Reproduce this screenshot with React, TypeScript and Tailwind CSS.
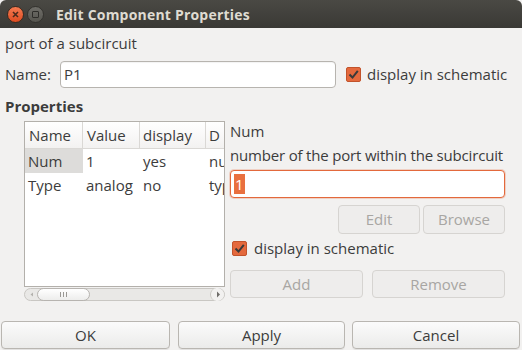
const font = "font-['Open_Sans','DejaVu_Sans',sans-serif]"

function CheckBox() {
  return (
    <span className="w-[15px] h-[15px] rounded-[2px] bg-[#e4693d] border border-[#c2532b] flex items-center justify-center shrink-0">
      <svg width="11" height="11" viewBox="0 0 11 11">
        <path d="M1.5 5.5 L4.5 8.5 L9.8 1.8" fill="none" stroke="#3a3a3a" strokeWidth="2" />
      </svg>
    </span>
  )
}

interface ButtonProps {
  label: string
  disabled?: boolean
  className?: string
}

function Button({ label, disabled = false, className = '' }: ButtonProps) {
  return (
    <div
      className={`flex items-center justify-center rounded-[4px] border ${
        disabled
          ? 'border-[#d6d4d1] text-[#a8a6a3] bg-[#eeedec]'
          : 'border-[#b9b6b1] text-[#3c3c3c] bg-gradient-to-b from-[#fbfbfb] to-[#ebebea] shadow-[0_1px_0_rgba(0,0,0,0.06)]'
      } ${className}`}
    >
      {label}
    </div>
  )
}

function PropertyTable() {
  const rows = [
    { name: 'Num', value: '1', display: 'yes', desc: 'number', selected: true },
    { name: 'Type', value: 'analog', display: 'no', desc: 'type', selected: false },
  ]
  return (
    <div className="w-[201px] ml-[24px] flex flex-col">
      <div className="h-[166px] border border-[#b3b0ab] bg-white overflow-hidden">
        <div className="flex h-[27px] border-b border-[#dad8d5] bg-gradient-to-b from-[#ffffff] to-[#f3f2f1] overflow-hidden">
          <div className="w-[58px] shrink-0 pl-[4px] flex items-center border-r border-[#dad8d5]">Name</div>
          <div className="w-[57px] shrink-0 pl-[4px] flex items-center border-r border-[#dad8d5]">Value</div>
          <div className="w-[66px] shrink-0 pl-[3px] flex items-center border-r border-[#dad8d5]">display</div>
          <div className="w-[18px] shrink-0 pl-[3px] flex items-center overflow-hidden">D</div>
        </div>
        {rows.map((r) => (
          <div key={r.name} className="flex h-[24px] items-center whitespace-nowrap overflow-hidden">
            <div className={`w-[58px] h-full shrink-0 pl-[3px] flex items-center ${r.selected ? 'bg-[#dddcda]' : ''}`}>{r.name}</div>
            <div className="w-[57px] shrink-0 pl-[3px]">{r.value}</div>
            <div className="w-[66px] shrink-0 pl-[3px]">{r.display}</div>
            <div className="w-[18px] shrink-0 pl-[3px] overflow-hidden">{r.desc}</div>
          </div>
        ))}
      </div>
      {/* horizontal scrollbar */}
      <div className="h-[13px] mt-px rounded-full border border-[#c9c7c3] bg-[#e9e8e6] flex items-center">
        <svg width="10" height="11" viewBox="0 0 10 11" className="shrink-0 ml-[2px]">
          <path d="M6 3.5 L3.5 5.5 L6 7.5 Z" fill="#b3b1ad" />
        </svg>
        <div className="w-[53px] h-[13px] -my-px rounded-full border border-[#b7b4b0] bg-gradient-to-b from-[#ffffff] to-[#ededec] flex items-center justify-center gap-[2px]">
          <span className="w-px h-[5px] bg-[#9a9894]" />
          <span className="w-px h-[5px] bg-[#9a9894]" />
          <span className="w-px h-[5px] bg-[#9a9894]" />
        </div>
        <div className="flex-1" />
        <div className="w-[14px] h-[13px] -my-px rounded-full border-l border-[#c9c7c3] bg-[#f2f1f0] flex items-center justify-center">
          <svg width="8" height="9" viewBox="0 0 8 9">
            <path d="M3 1.5 L6 4.5 L3 7.5 Z" fill="#6e6c68" />
          </svg>
        </div>
      </div>
    </div>
  )
}

export default function App() {
  return (
    <div className={`w-[522px] h-[350px] bg-[#f2f1f0] flex flex-col overflow-hidden text-[15px] text-[#3c3c3c] ${font}`}>
      {/* title bar */}
      <div className="h-[28px] shrink-0 rounded-t-[6px] bg-gradient-to-b from-[#4a4944] to-[#3a3935] flex items-center">
        <div className="ml-[7px] w-[17px] h-[17px] rounded-full bg-gradient-to-b from-[#f47a50] to-[#de4b1f] border border-[#3a2a20] flex items-center justify-center">
          <svg width="7" height="7" viewBox="0 0 7 7">
            <path d="M1 1 L6 6 M6 1 L1 6" stroke="#4a2a1c" strokeWidth="1.6" />
          </svg>
        </div>
        <div className="ml-[3px] w-[17px] h-[17px] rounded-full bg-gradient-to-b from-[#6e6d68] to-[#56554f] border border-[#33322e] flex items-center justify-center">
          <span className="w-[7px] h-[7px] border-[1.5px] border-[#2e2d2a] rounded-[1px]" />
        </div>
        <span className="ml-[12px] text-[14px] font-bold text-[#dfdbd2] tracking-[0.2px]">Edit Component Properties</span>
      </div>

      {/* body */}
      <div className="flex-1 flex flex-col">
        <div className="h-[29px] pl-[5px] flex items-center mt-[1px]">port of a subcircuit</div>

        <div className="h-[27px] mt-[3px] flex items-center">
          <span className="ml-[5px] w-[55px]">Name:</span>
          <div className="w-[276px] h-[27px] rounded-[4px] border border-[#b7b4af] bg-white flex items-center pl-[3px] shadow-[inset_0_1px_1px_rgba(0,0,0,0.05)]">
            P1
          </div>
          <div className="ml-[10px] flex items-center gap-[6px]">
            <CheckBox />
            <span>display in schematic</span>
          </div>
        </div>

        <div className="h-[22px] mt-[7px] pl-[5px] flex items-center font-bold">Properties</div>

        <div className="flex mt-[4px]">
          <PropertyTable />

          <div className="ml-[5px] w-[275px] flex flex-col">
            <div className="h-[22px] mt-[-1px] flex items-center">Num</div>
            <div className="h-[24px] mt-[1px] flex items-center whitespace-nowrap tracking-[-0.18px]">number of the port within the subcircuit</div>
            <div className="h-[28px] mt-[3px] rounded-[4px] border border-[#e3693c] bg-white flex items-center pl-[3px] shadow-[0_0_0_1px_rgba(233,112,63,0.25)]">
              <span className="bg-[#e9703f] text-white h-[20px] px-px flex items-center">1</span>
            </div>
            <div className="flex justify-end gap-[3px] mt-[7px]">
              <Button label="Edit" disabled className="w-[82px] h-[29px]" />
              <Button label="Browse" disabled className="w-[82px] h-[29px]" />
            </div>
            <div className="h-[22px] mt-[3px] pl-[2px] flex items-center gap-[7px]">
              <CheckBox />
              <span>display in schematic</span>
            </div>
            <div className="flex justify-between mt-[11px]">
              <Button label="Add" disabled className="w-[133px] h-[28px]" />
              <Button label="Remove" disabled className="w-[133px] h-[28px]" />
            </div>
          </div>
        </div>

        <div className="flex gap-[8px] px-[1px] mt-[20px]">
          <Button label="OK" className="w-[169px] h-[28px]" />
          <Button label="Apply" className="w-[167px] h-[28px]" />
          <Button label="Cancel" className="w-[168px] h-[28px] ml-[-1px]" />
        </div>
      </div>
    </div>
  )
}
